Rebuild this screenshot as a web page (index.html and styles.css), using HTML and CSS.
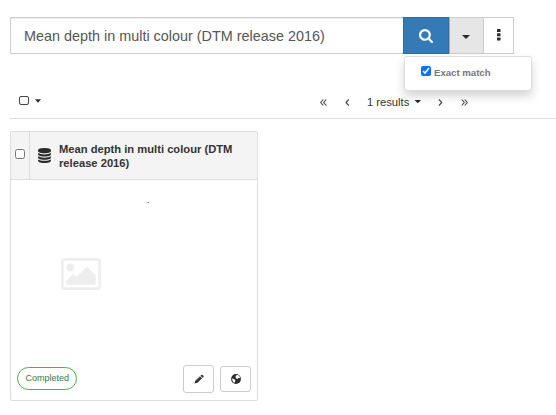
FILE: index.html
```html
<!DOCTYPE html>
<html lang="en">
<head>
<meta charset="utf-8">
<title>Search results</title>
<link rel="stylesheet" href="styles.css">
</head>
<body>
<form class="search">
  <input class="search-input" type="text" value="Mean depth in multi colour (DTM release 2016)">
  <button class="btn-search" type="button"><svg width="14" height="14" viewBox="64 128 1664 1664"><path d="M1216 832q0-185-131.500-316.500t-316.500-131.500-316.500 131.500-131.500 316.500 131.500 316.500 316.500 131.500 316.500-131.500 131.500-316.500zm512 832q0 52-38 90t-90 38q-54 0-90-38l-343-342q-179 124-399 124-143 0-273.500-55.500t-225-150-150-225-55.500-273.500 55.500-273.500 150-225 225-150 273.500-55.500 273.500 55.500 225 150 150 225 55.500 273.500q0 220-124 399l343 343q37 37 37 90z"/></svg></button>
  <div class="options">
    <button class="btn-caret" type="button"><span class="caret large"></span></button>
    <div class="menu"><input class="check" type="checkbox" checked><span>Exact match</span></div>
  </div>
  <button class="btn-more" type="button"><svg width="4" height="12" viewBox="0 0 4 12"><rect width="3.500" height="3" rx=".6"/><rect y="4.300" width="3.500" height="3" rx=".6"/><rect y="8.600" width="3.500" height="3" rx=".6"/></svg></button>
</form>
<div class="toolbar">
  <div class="select-all"><span class="box"></span><span class="caret"></span></div>
  <nav class="pager">
    <svg class="first" width="7" height="7" viewBox="0 0 7 7"><path d="M3.300.5.700 3.500l2.600 3M6.300.5 3.700 3.500l2.600 3"/></svg>
    <svg class="prev" width="5" height="7" viewBox="0 0 5 7"><path d="M3.800.5 1 3.500l2.800 3"/></svg>
    <span class="count">1 results</span><span class="caret"></span>
    <svg class="next" width="5" height="7" viewBox="0 0 5 7"><path d="M1 .5l2.800 3L1 6.500"/></svg>
    <svg class="last" width="7" height="7" viewBox="0 0 7 7"><path d="M.7.5l2.600 3-2.600 3M3.700.5l2.600 3-2.600 3"/></svg>
  </nav>
</div>
<article class="card">
  <header class="card-head">
    <div class="card-check"><input class="check" type="checkbox"></div>
    <svg class="db" width="13" height="15" viewBox="128 0 1536 1792"><path d="M896 768q237 0 443-43t325-127v170q0 69-103 128t-280 93.500-385 34.500-385-34.500-280-93.500-103-128v-170q119 84 325 127t443 43zm0 768q237 0 443-43t325-127v170q0 69-103 128t-280 93.500-385 34.500-385-34.500-280-93.500-103-128v-170q119 84 325 127t443 43zm0-384q237 0 443-43t325-127v170q0 69-103 128t-280 93.500-385 34.500-385-34.500-280-93.500-103-128v-170q119 84 325 127t443 43zm0-1152q208 0 385 34.500t280 93.500 103 128v128q0 69-103 128t-280 93.500-385 34.500-385-34.500-280-93.500-103-128v-128q0-69 103-128t280-93.500 385-34.500z"/></svg>
    <h2 class="title">Mean depth in multi colour (DTM release 2016)</h2>
  </header>
  <div class="card-body">
    <div class="thumb"><svg width="40" height="32" viewBox="0 128 1920 1536"><path d="M640 576q0 80-56 136t-136 56-136-56-56-136 56-136 136-56 136 56 56 136zm1024 384v448h-1408v-192l320-320 160 160 512-512zm96-704h-1600q-13 0-22.500 9.500t-9.500 22.500v1216q0 13 9.500 22.500t22.500 9.500h1600q13 0 22.500-9.500t9.500-22.500v-1216q0-13-9.500-22.500t-22.500-9.500zm160 32v1216q0 66-47 113t-113 47h-1600q-66 0-113-47t-47-113v-1216q0-66 47-113t113-47h1600q66 0 113 47t47 113z"/></svg></div>
    <p class="abstract">.</p>
  </div>
  <footer class="card-foot">
    <span class="status">Completed</span>
    <div class="actions">
      <button class="action" type="button"><svg width="10" height="10" viewBox="0 0 10 10"><path d="M.5 9.600l.8-2.900L6 2.300l2 2-4.600 4.500zM6.600 1.700l.8-.8q.6-.5 1.200 0l.8.8q.6.600 0 1.200l-.8.800z"/><path class="shine" d="M2.500 6.900l3.600-3.500"/></svg></button>
      <button class="action view" type="button"><svg width="10" height="10" viewBox="0 0 10 10"><circle cx="5" cy="5" r="4.900"/><path class="land" d="M5.300 1.300l1.700-.3 1.300 1 .9 1.900-1.700.1-1 .9-1.300-.5-.8-1.400zM1 4.500l1.500.3 1.900 1.200-.2 1.300-1.100 1.600-1.400-1.600z"/></svg></button>
    </div>
  </footer>
</article>
</body>
</html>
```
FILE: styles.css
```css
* { box-sizing: border-box; }
body {
  margin: 0;
  padding: 17px 0 0 10px;
  background: #fff;
  color: #333;
  font: 11.200px/14px "Liberation Sans", Arial, sans-serif;
  overflow: hidden;
}
button { margin: 0; padding: 0; font: inherit; display: flex; align-items: center; justify-content: center; }
svg { display: block; flex: none; fill: #2b2b2b; }
.search { display: flex; height: 37px; width: 504px; margin: 0; }
.search-input {
  width: 393px; height: 37px; margin: 0; padding: 0 13px;
  border: 1px solid #ccc; border-right: 0; border-radius: 0;
  box-shadow: inset 0 1px 1px rgba(0,0,0,.075);
  color: #555; background: #fff; outline: 0;
  font: 14.400px "Liberation Sans", Arial, sans-serif;
}
.btn-search { width: 46px; background: #337ab7; border: 1px solid #2e6da4; }
.btn-search svg { fill: #fff; }
.options { position: relative; display: flex; }
.btn-caret { width: 35px; border: 1px solid #ccc; border-left-color: #adadad; background: #e6e6e6; }
.btn-more { width: 30px; border: 1px solid #ccc; border-left: 0; background: #fff; }
.btn-more svg { margin-top: -2px; }
.caret { display: inline-block; width: 7px; height: 3.500px; background: #2b2b2b; clip-path: polygon(0 0, 100% 0, 50% 100%); }
.caret.large { width: 8px; height: 4px; margin-top: 3px; margin-right: 1px; }
.menu {
  position: absolute; z-index: 2; left: -45px; top: 39px; width: 128px; height: 35px;
  display: flex; padding: 9px 16px; border: 1px solid #ddd; border-radius: 3px;
  background: #fff; box-shadow: 0 5px 10px rgba(0,0,0,.176);
  color: #777; font-weight: bold; font-size: 9.600px; line-height: 13px;
}
.menu span { margin-left: 3px; white-space: nowrap; }
.check { width: 10px; height: 10px; margin: 0; }
.toolbar { display: flex; align-items: center; height: 65px; padding-top: 31px; border-bottom: 1px solid #ddd; }
.select-all { display: flex; align-items: center; width: 310px; padding-left: 9px; margin-top: -2px; }
.box { width: 10px; height: 9px; border: 1px solid #444; border-radius: 2px; margin-right: 6px; }
.select-all .caret { width: 6px; margin-top: 1px; }
.pager { display: flex; align-items: center; }
.pager svg { fill: none; stroke: #444; stroke-width: 1.100; margin-top: 1px; }
.pager .prev { margin-left: 18px; }
.count { margin-left: 17px; margin-right: 5px; }
.pager .next { margin-left: 17px; }
.pager .last { margin-left: 18px; }
.card {
  display: flex; flex-direction: column; width: 248px; height: 270px; margin-top: 12px;
  border: 1px solid #ddd; border-radius: 2px; box-shadow: 0 1px 1px rgba(0,0,0,.05);
}
.card-head { display: flex; align-items: center; height: 48px; flex: none; background: #f4f4f4; border-bottom: 1px solid #ddd; }
.card-check { align-self: stretch; width: 19px; padding: 17px 0 0 4px; border-right: 1px solid #ddd; }
.card-check .check { display: block; }
.db { margin: 0 8px 0; }
.title { margin: 1px 0 0; width: 185px; font-size: 11.200px; line-height: 14px; }
.card-body { display: grid; grid-template-columns: 136px 1fr; flex: 1; }
.thumb { padding: 78px 0 0 49.500px; }
.thumb svg { fill: #eee; }
.abstract { margin: 14px 0 0; font-size: 9px; line-height: 12px; }
.card-foot { display: flex; align-items: center; justify-content: space-between; height: 43px; padding: 0 6px; }
.status {
  height: 23px; padding: 0 7.500px; border: 1px solid #4cae4c; border-radius: 12px;
  color: #3c763d; font-size: 9px; line-height: 21px; width: 60px;
}
.actions { display: flex; align-items: center; gap: 6px; }
.action { width: 31px; height: 28px; border: 1px solid #ccc; border-radius: 3px; background: #fff; }
.view { height: 26px; }
.land { fill: #fff; }
.shine { fill: none; stroke: #999; stroke-width: .4; }
```
